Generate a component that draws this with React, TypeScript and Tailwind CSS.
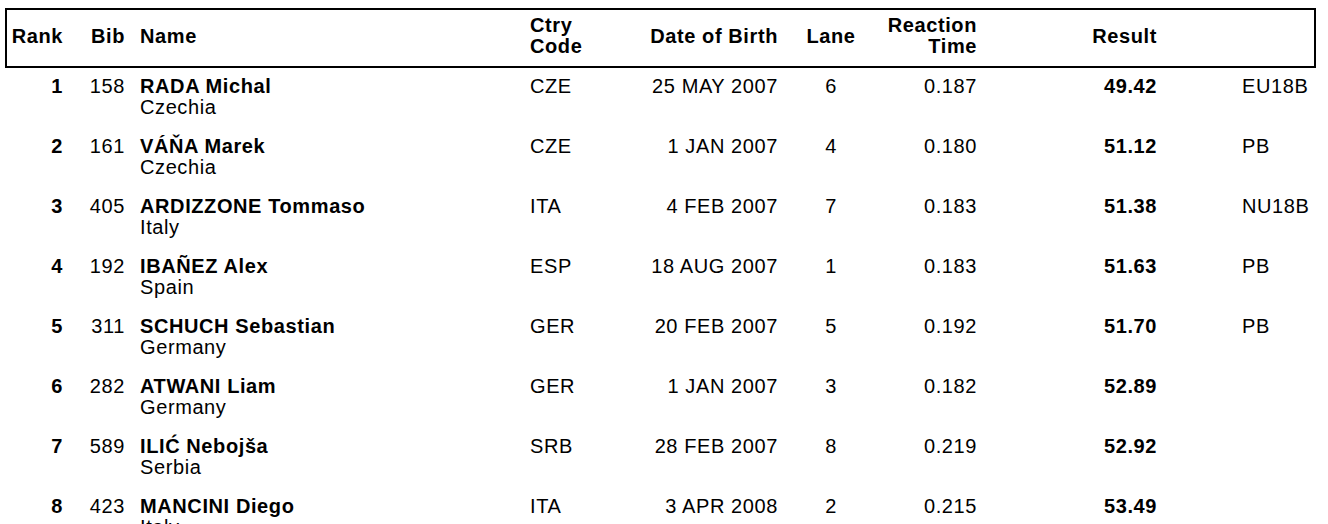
import React from "react";

type Row = {
  rank: string;
  bib: string;
  name: string;
  country: string;
  code: string;
  dob: string;
  lane: string;
  rt: string;
  result: string;
  rec: string;
};

const rows: Row[] = [
  { rank: "1", bib: "158", name: "RADA Michal", country: "Czechia", code: "CZE", dob: "25 MAY 2007", lane: "6", rt: "0.187", result: "49.42", rec: "EU18B" },
  { rank: "2", bib: "161", name: "VÁŇA Marek", country: "Czechia", code: "CZE", dob: "1 JAN 2007", lane: "4", rt: "0.180", result: "51.12", rec: "PB" },
  { rank: "3", bib: "405", name: "ARDIZZONE Tommaso", country: "Italy", code: "ITA", dob: "4 FEB 2007", lane: "7", rt: "0.183", result: "51.38", rec: "NU18B" },
  { rank: "4", bib: "192", name: "IBAÑEZ Alex", country: "Spain", code: "ESP", dob: "18 AUG 2007", lane: "1", rt: "0.183", result: "51.63", rec: "PB" },
  { rank: "5", bib: "311", name: "SCHUCH Sebastian", country: "Germany", code: "GER", dob: "20 FEB 2007", lane: "5", rt: "0.192", result: "51.70", rec: "PB" },
  { rank: "6", bib: "282", name: "ATWANI Liam", country: "Germany", code: "GER", dob: "1 JAN 2007", lane: "3", rt: "0.182", result: "52.89", rec: "" },
  { rank: "7", bib: "589", name: "ILIĆ Nebojša", country: "Serbia", code: "SRB", dob: "28 FEB 2007", lane: "8", rt: "0.219", result: "52.92", rec: "" },
  { rank: "8", bib: "423", name: "MANCINI Diego", country: "Italy", code: "ITA", dob: "3 APR 2008", lane: "2", rt: "0.215", result: "53.49", rec: "" },
];

const cols = "grid grid-cols-[56px_62px_405px_110px_138px_106px_93px_180px_157px]";

export default function App() {
  return (
    <div
      className="w-[1328px] min-h-[524px] bg-white text-black text-[20px] leading-[21px] tracking-[0.6px] pl-[5px] pt-[8px]"
      style={{ fontFamily: '"Liberation Sans", Arial, Helvetica, sans-serif' }}
    >
      <div className="w-[1311px]">
        <div className={`${cols} items-center border-2 border-black pt-[5px] pb-[9px] font-bold`}>
          <div className="text-right">Rank</div>
          <div className="text-right">Bib</div>
          <div className="pl-[15px]">Name</div>
          <div>
            <div>Ctry</div>
            <div>Code</div>
          </div>
          <div className="text-right">Date of Birth</div>
          <div className="text-center">Lane</div>
          <div className="text-right">
            <div>Reaction</div>
            <div>Time</div>
          </div>
          <div className="text-right">Result</div>
          <div />
        </div>
        {rows.map((r) => (
          <div key={r.rank} className={`${cols} items-start h-[60px] pt-[8px] px-[2px]`}>
            <div className="text-right font-bold">{r.rank}</div>
            <div className="text-right">{r.bib}</div>
            <div className="pl-[15px]">
              <div className="font-bold">{r.name}</div>
              <div>{r.country}</div>
            </div>
            <div>{r.code}</div>
            <div className="text-right">{r.dob}</div>
            <div className="text-center">{r.lane}</div>
            <div className="text-right">{r.rt}</div>
            <div className="text-right font-bold">{r.result}</div>
            <div className="pl-[85px]">{r.rec}</div>
          </div>
        ))}
      </div>
    </div>
  );
}
